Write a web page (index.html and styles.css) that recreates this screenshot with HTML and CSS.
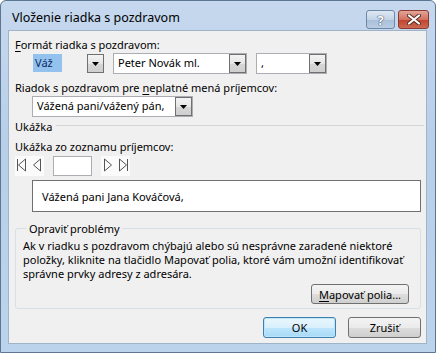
FILE: index.html
```html
<!DOCTYPE html>
<html lang="sk">

<head>
    <meta charset="UTF-8">
    <title>Vloženie riadka s pozdravom</title>
    <link rel="stylesheet" href="styles.css">
</head>

<body>
    <div class="window">
        <div class="titlebar">
            <span class="title">Vloženie riadka s pozdravom</span>
            <div class="caption">
                <span class="cap-btn help">?</span>
                <span class="cap-btn close">
                    <svg width="14" height="11" viewBox="0 0 14 11">
                        <path d="M2 1.5 L12 9.5 M12 1.5 L2 9.5" stroke="#5a2a22" stroke-width="4" stroke-linecap="round" />
                        <path d="M2 1.5 L12 9.5 M12 1.5 L2 9.5" stroke="#ffffff" stroke-width="2.2" stroke-linecap="round" />
                    </svg>
                </span>
            </div>
        </div>
        <div class="client">
            <div class="label"><u>F</u>ormát riadka s pozdravom:</div>
            <div class="row indent">
                <div class="combo plain c1"><span class="text"><span class="sel">Váž</span></span><span class="drop"><svg width="7" height="4" viewBox="0 0 7 4"><path d="M0 0 H7 L3.5 4 Z" fill="#000" /></svg></span></div>
                <div class="combo c2"><span class="text">Peter Novák ml.</span><span class="drop"><svg width="7" height="4" viewBox="0 0 7 4"><path d="M0 0 H7 L3.5 4 Z" fill="#000" /></svg></span></div>
                <div class="combo c3"><span class="text">,</span><span class="drop"><svg width="7" height="4" viewBox="0 0 7 4"><path d="M0 0 H7 L3.5 4 Z" fill="#000" /></svg></span></div>
            </div>
            <div class="label l2">Riadok s pozdravom pre <u>n</u>eplatné mená príjemcov:</div>
            <div class="row indent">
                <div class="combo c4"><span class="text">Vážená pani/vážený pán,</span><span class="drop"><svg width="7" height="4" viewBox="0 0 7 4"><path d="M0 0 H7 L3.5 4 Z" fill="#000" /></svg></span></div>
            </div>
            <div class="section">
                <span>Ukážka</span>
                <span class="rule"></span>
            </div>
            <div class="label l3">Ukážka zo zoznamu príjemcov:</div>
            <div class="nav">
                <span class="nav-btns">
                    <svg width="29" height="20" viewBox="0 0 29 20">
                        <path d="M2.5 3 V15 M10.5 3 L3.5 9 L10.5 15 Z M25.5 3 L18.5 9 L25.5 15 Z" fill="none" stroke="#555" stroke-width="1" />
                    </svg>
                </span>
                <span class="nav-input"></span>
                <span class="nav-btns">
                    <svg width="29" height="20" viewBox="0 0 29 20">
                        <path d="M3.5 3 L10.5 9 L3.5 15 Z M18.5 3 L25.5 9 L18.5 15 Z M26.5 3 V15" fill="none" stroke="#555" stroke-width="1" />
                    </svg>
                </span>
            </div>
            <div class="preview">Vážená pani Jana Kováčová,</div>
            <fieldset class="group">
                <legend>Opraviť problémy</legend>
                <p class="info">Ak v riadku s pozdravom chýbajú alebo sú nesprávne zaradené niektoré<br>položky, kliknite na tlačidlo Mapovať polia, ktoré vám umožní identifikovať<br>správne prvky adresy z adresára.</p>
                <div class="group-actions">
                    <span class="btn map"><u>M</u>apovať polia...</span>
                </div>
            </fieldset>
            <div class="actions">
                <span class="btn default">OK</span>
                <span class="btn">Zrušiť</span>
            </div>
        </div>
    </div>
</body>

</html>
```

FILE: styles.css
```css
* {
    padding: 0;
    margin: 0;
    box-sizing: border-box;
}

body {
    font-family: "Noto Sans", "Open Sans", sans-serif;
    font-size: 11px;
    color: #000;
    background: #fff;
}

u {
    text-decoration: underline;
    text-underline-offset: 2px;
}

.window {
    width: 436px;
    height: 353px;
    border: 1px solid #5d7692;
    border-radius: 6px 6px 0 0;
    background: linear-gradient(#c6d8ee, #b8cfe9 40%, #bcd3ec);
    padding: 0 8px 8px 7px;
    display: flex;
    flex-direction: column;
}

.titlebar {
    height: 29px;
    display: flex;
    justify-content: space-between;
}

.title {
    font-size: 12.5px;
    line-height: 16px;
    padding: 9px 0 0 4px;
}

.caption {
    display: flex;
    gap: 3px;
    align-items: flex-end;
    padding-bottom: 1px;
    margin-right: -2px;
}

.cap-btn {
    height: 19px;
    width: 29px;
    border: 1px solid #6d87a6;
    border-radius: 3px;
    display: flex;
    align-items: center;
    justify-content: center;
}

.help {
    background: linear-gradient(#dfe8f3, #c3d3e6 50%, #a9bfd9 51%, #b9cde4);
    color: #fff;
    font-weight: bold;
    font-size: 13px;
    text-shadow: 0 0 1px #3e5470, 0 0 1px #3e5470, 0 0 1px #3e5470;
}

.close {
    width: 31px;
    border-color: #8a3a30;
    background: linear-gradient(#e3a597, #d27260 50%, #c2412e 51%, #cc6a52);
}

.client {
    flex: 1;
    background: #f0f0f0;
    border: 1px solid #9fb3c9;
    padding: 6px 5px 0 6px;
    display: flex;
    flex-direction: column;
}

.label {
    line-height: 15px;
    height: 15px;
}

.l2 {
    margin-top: 6px;
}

.l3 {
    margin-top: 5px;
}

.row {
    display: flex;
    margin-top: 1px;
}

.indent {
    padding-left: 17px;
}

.combo {
    display: flex;
    height: 21px;
    border: 1px solid #abadb3;
    background: #fff;
}

.combo .text {
    flex: 1;
    padding-left: 4px;
    line-height: 18px;
    white-space: nowrap;
    overflow: hidden;
}

.combo.plain {
    border-color: transparent;
    background: transparent;
}

.combo.plain .text {
    padding-left: 0;
}

.sel {
    display: inline-block;
    background: #93c2ef;
    color: #0c2a66;
    padding: 0 9px 0 2px;
    line-height: 18px;
}

.drop {
    width: 17px;
    height: 19px;
    border: 1px solid #707070;
    background: linear-gradient(#f3f3f3, #e6e6e6 50%, #d6d6d6 51%, #cfcfcf);
    display: flex;
    align-items: center;
    justify-content: center;
}

.c1 {
    width: 73px;
}

.c2 {
    width: 134px;
    margin-left: 8px;
}

.c3 {
    width: 71px;
    margin-left: 9px;
}

.c4 {
    width: 161px;
}

.section {
    display: flex;
    align-items: center;
    gap: 4px;
    margin-top: 2px;
    line-height: 15px;
    margin-right: -3px;
}

.rule {
    flex: 1;
    height: 1px;
    background: #d5d5d5;
    margin-top: -3px;
}

.nav {
    display: flex;
    gap: 9px;
    height: 20px;
    margin-top: 2px;
}

.nav-btns {
    width: 29px;
    height: 20px;
    background: #fbfbfb;
    display: flex;
}

.nav-input {
    width: 39px;
    height: 20px;
    border: 1px solid #abadb3;
    background: #fff;
}

.preview {
    margin: 4px 0 0 17px;
    height: 32px;
    border: 1px solid #707070;
    background: #fff;
    padding-left: 9px;
    display: flex;
    align-items: center;
}

.group {
    margin-top: 9px;
    border: 1px solid #d5dfe5;
    border-radius: 3px;
    padding: 0 11px 4px 7px;
    min-width: 0;
}

.group legend {
    padding: 0 2px;
    margin-left: 4px;
    line-height: 15px;
}

.info {
    margin-top: 3px;
    line-height: 14px;
    white-space: nowrap;
}

.group-actions {
    display: flex;
    justify-content: flex-end;
    margin-top: 3px;
}

.btn {
    height: 21px;
    width: 73px;
    border: 1px solid #707070;
    border-radius: 3px;
    background: linear-gradient(#f3f3f3, #ebebeb 50%, #dddddd 51%, #cfcfcf);
    display: flex;
    align-items: center;
    justify-content: center;
    line-height: 15px;
}

.btn.map {
    width: 98px;
    height: 20px;
}

.btn.default {
    border-color: #3c7fb1;
    box-shadow: inset 0 0 0 1px #bfe3f7;
    background: linear-gradient(#eaf6fd, #d9f0fc 50%, #bee6fd 51%, #a7d9f5);
}

.actions {
    display: flex;
    justify-content: flex-end;
    gap: 12px;
    margin-top: 8px;
}
```
